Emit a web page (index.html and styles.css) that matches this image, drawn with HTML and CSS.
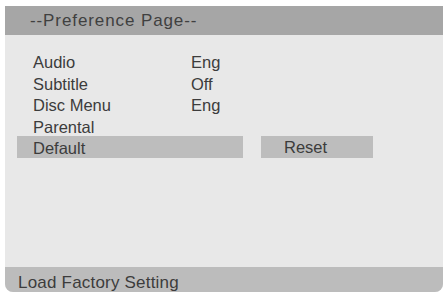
FILE: index.html
```html
<!DOCTYPE html>
<html lang="en">
<head>
    <meta charset="UTF-8">
    <title>Preference Page</title>
    <link rel="stylesheet" href="styles.css">
</head>
<body>
    <div class="screen">
        <div class="title-bar">--Preference Page--</div>
        <div class="content">
            <div class="row">
                <div class="item"><span class="label">Audio</span><span class="value">Eng</span></div>
            </div>
            <div class="row">
                <div class="item"><span class="label">Subtitle</span><span class="value">Off</span></div>
            </div>
            <div class="row">
                <div class="item"><span class="label">Disc Menu</span><span class="value">Eng</span></div>
            </div>
            <div class="row">
                <div class="item"><span class="label">Parental</span></div>
            </div>
            <div class="row">
                <div class="item selected"><span class="label">Default</span></div>
                <div class="option">Reset</div>
            </div>
        </div>
        <div class="status-bar">Load Factory Setting</div>
    </div>
</body>
</html>
```

FILE: styles.css
```css
body {
    margin: 0;
    background-color: #ffffff;
    font-family: "Liberation Sans", Arial, sans-serif;
    color: #3c3c3c;
}
.screen {
    margin: 6px 3px 0 5px;
    width: 438px;
    height: 286px;
    background-color: #e8e8e8;
    border-radius: 0 0 8px 8px;
    display: flex;
    flex-direction: column;
    overflow: hidden;
}
.title-bar {
    height: 29px;
    line-height: 29px;
    background-color: #a6a6a6;
    padding-left: 25px;
    font-size: 17px;
    letter-spacing: 0.9px;
    color: #404040;
}
.content {
    flex: 1;
    padding: 15px 0 0 12px;
}
.row {
    display: flex;
    gap: 18px;
    height: 21.5px;
    font-size: 16.5px;
}
.item {
    width: 226px;
    height: 22px;
    line-height: 24px;
    display: flex;
}
.label {
    padding-left: 16px;
    width: 158px;
}
.selected {
    background-color: #bdbdbd;
}
.option {
    width: 112px;
    height: 22px;
    line-height: 22px;
    background-color: #bdbdbd;
    padding-left: 23px;
    box-sizing: border-box;
}
.status-bar {
    height: 25px;
    line-height: 31px;
    background-color: #bcbcbc;
    padding-left: 13px;
    font-size: 17px;
    letter-spacing: 0.2px;
    color: #3c3c3c;
}
```
